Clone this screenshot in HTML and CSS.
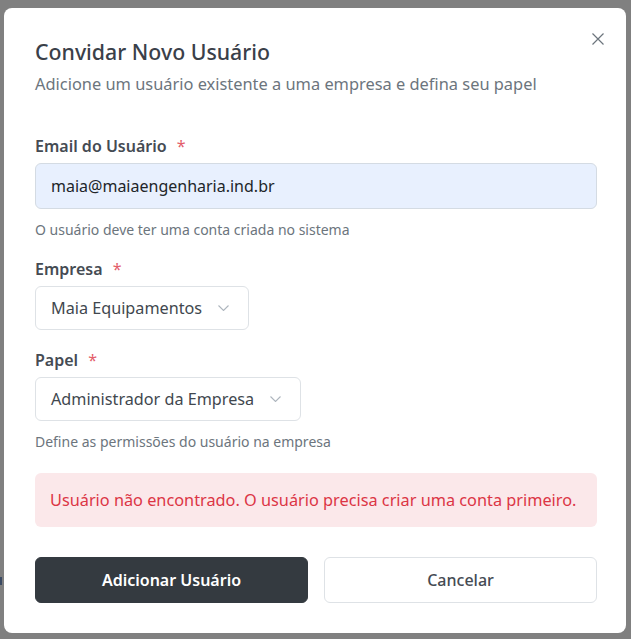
FILE: index.html
```html
<!DOCTYPE html>
<html lang="pt-BR">
<head>
<meta charset="utf-8">
<title>Convidar Novo Usuário</title>
<link rel="stylesheet" href="styles.css">
</head>
<body>
<div class="peek"></div>
<div class="modal">
  <button class="close" aria-label="Fechar">
    <svg width="12" height="12" viewBox="0 0 12 12"><path d="M0.5 0.5L11.5 11.5M11.5 0.5L0.5 11.5" stroke="#6c757d" stroke-width="1.2" fill="none"/></svg>
  </button>
  <header class="head">
    <h1 class="title">Convidar Novo Usuário</h1>
    <p class="subtitle">Adicione um usuário existente a uma empresa e defina seu papel</p>
  </header>
  <form class="form">
    <div class="field">
      <label class="label">Email do Usuário <span class="req">*</span></label>
      <div class="input">maia@maiaengenharia.ind.br</div>
      <p class="help">O usuário deve ter uma conta criada no sistema</p>
    </div>
    <div class="field">
      <label class="label">Empresa <span class="req">*</span></label>
      <div class="select">Maia Equipamentos
        <svg class="chev" width="11" height="6" viewBox="0 0 11 6"><path d="M0.5 0.5L5.5 5.5L10.5 0.5" stroke="#adb5bd" stroke-width="1.1" fill="none"/></svg>
      </div>
    </div>
    <div class="field">
      <label class="label">Papel <span class="req">*</span></label>
      <div class="select">Administrador da Empresa
        <svg class="chev" width="11" height="6" viewBox="0 0 11 6"><path d="M0.5 0.5L5.5 5.5L10.5 0.5" stroke="#adb5bd" stroke-width="1.1" fill="none"/></svg>
      </div>
      <p class="help">Define as permissões do usuário na empresa</p>
    </div>
    <div class="alert">Usuário não encontrado. O usuário precisa criar uma conta primeiro.</div>
    <div class="actions">
      <button type="button" class="btn primary">Adicionar Usuário</button>
      <button type="button" class="btn secondary">Cancelar</button>
    </div>
  </form>
</div>
</body>
</html>
```

FILE: styles.css
```css
* { box-sizing: border-box; }
html, body { margin: 0; padding: 0; }
body {
  background: #808080;
  font-family: "Noto Sans", "Open Sans", sans-serif;
  width: 631px;
  height: 639px;
  overflow: hidden;
  position: relative;
  padding: 8px 0 0 4px;
}
.peek {
  position: absolute;
  left: 0;
  top: 577px;
  width: 2px;
  height: 8px;
  background: #3b4a63;
}
.modal {
  position: relative;
  width: 622px;
  height: 625px;
  background: #fff;
  border-radius: 8px;
  padding: 29px 29px 0 31px;
}
.close {
  position: absolute;
  top: 25px;
  right: 22px;
  border: 0;
  background: none;
  padding: 0;
  width: 12px;
  height: 12px;
  display: flex;
}
.head { margin-bottom: 38px; }
.title {
  margin: 0;
  font-size: 21.3px;
  line-height: 30px;
  font-weight: 500;
  color: #3a4049;
}
.subtitle {
  margin: 5px 0 0;
  font-size: 16.4px;
  line-height: 24px;
  color: #6c757d;
}
.form { display: flex; flex-direction: column; }
.field { display: flex; flex-direction: column; margin-bottom: 18px; }
.label {
  font-size: 16px;
  line-height: 24px;
  font-weight: 600;
  color: #454b53;
  margin-bottom: 5px;
}
.req { color: #e35d6a; margin-left: 6px; font-weight: 400; }
.input {
  height: 46px;
  border: 1px solid #d4dbe3;
  border-radius: 6px;
  background: #e8f0fe;
  padding: 0 15px;
  display: flex;
  align-items: center;
  font-size: 16px;
  color: #212529;
}
.select {
  align-self: flex-start;
  height: 44px;
  border: 1px solid #dee2e6;
  border-radius: 6px;
  background: #fff;
  padding: 0 19px 0 15px;
  display: flex;
  align-items: center;
  gap: 16px;
  font-size: 16.2px;
  color: #41474e;
}
.help {
  margin: 12px 0 0;
  font-size: 14px;
  line-height: 18px;
  color: #6c757d;
}
.alert {
  margin-top: 4px;
  height: 54px;
  border-radius: 6px;
  background: #fbe8ea;
  color: #dc3545;
  font-size: 16.3px;
  display: flex;
  align-items: center;
  padding: 0 15px;
}
.actions {
  margin-top: 30px;
  display: grid;
  grid-template-columns: 1fr 1fr;
  gap: 16px;
}
.btn {
  height: 46px;
  border-radius: 6px;
  font-family: inherit;
  font-size: 16px;
  cursor: pointer;
}
.primary {
  background: #343a40;
  border: 1px solid #343a40;
  color: #fff;
  font-weight: 600;
}
.secondary {
  background: #fff;
  border: 1px solid #dee2e6;
  color: #454b53;
  font-weight: 500;
}
```
